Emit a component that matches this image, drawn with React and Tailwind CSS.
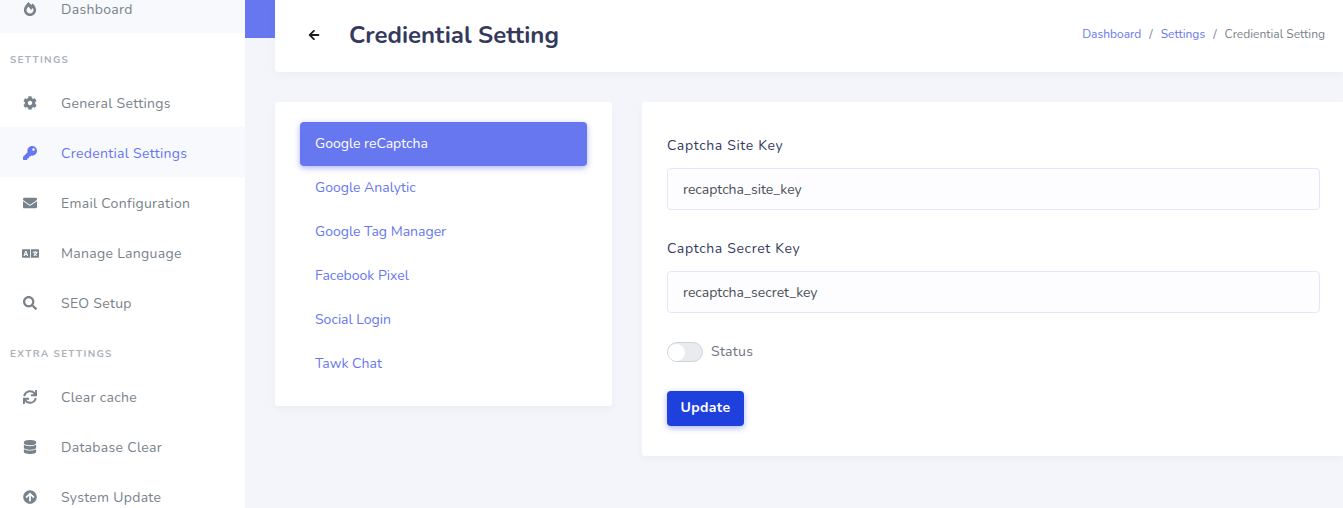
import {
  FaArrowCircleUp,
  FaArrowLeft,
  FaCog,
  FaDatabase,
  FaEnvelope,
  FaFireAlt,
  FaKey,
  FaLanguage,
  FaSearch,
  FaSync,
} from "react-icons/fa";

const font = "font-['Nunito','Lato','Noto_Sans',sans-serif]";

const SideItem = ({ icon: Icon, label, active, tint, size = 14 }) => (
  <div
    className={`flex h-[50px] items-center pt-[2px] ${tint || active ? "bg-[#f8f9fc]" : ""} ${
      active ? "text-[#6777ef]" : "text-[#78828a]"
    }`}
  >
    <span className="flex w-[61px] justify-center pr-[1px]">
      <Icon size={size} />
    </span>
    <span className="text-[14px] tracking-[0.3px]">{label}</span>
  </div>
);

const SideTitle = ({ children }) => (
  <div className="flex h-[44px] items-center pl-[10px] pt-[10.5px] text-[10px] font-bold tracking-[1.3px] text-[#a9b2ba]">
    {children}
  </div>
);

const Sidebar = () => (
  <aside className="w-[245px] shrink-0 overflow-hidden bg-white">
    <div className="-mt-[17px]">
      <SideItem icon={FaFireAlt} label="Dashboard" tint />
      <SideTitle>SETTINGS</SideTitle>
      <SideItem icon={FaCog} label="General Settings" />
      <SideItem icon={FaKey} label="Credential Settings" active />
      <SideItem icon={FaEnvelope} label="Email Configuration" />
      <SideItem icon={FaLanguage} label="Manage Language" size={17} />
      <SideItem icon={FaSearch} label="SEO Setup" />
      <SideTitle>EXTRA SETTINGS</SideTitle>
      <SideItem icon={FaSync} label="Clear cache" />
      <SideItem icon={FaDatabase} label="Database Clear" />
      <SideItem icon={FaArrowCircleUp} label="System Update" />
    </div>
  </aside>
);

const tabs = ["Google reCaptcha", "Google Analytic", "Google Tag Manager", "Facebook Pixel", "Social Login", "Tawk Chat"];

const Field = ({ label, value }) => (
  <div className="mb-[29px]">
    <label className="mb-[12px] block text-[14px] font-normal leading-[20px] tracking-[0.65px] text-[#34395e]">{label}</label>
    <input
      readOnly
      value={value}
      className="h-[42px] w-full rounded-[4px] border border-[#e4e6fc] bg-[#fdfdff] px-[15px] text-[14px] text-[#495057] outline-none"
    />
  </div>
);

export default function App() {
  return (
    <div className={`flex h-[508px] w-full overflow-hidden bg-[#f4f6f9] ${font}`}>
      <Sidebar />

      <main className="relative min-w-0 flex-1 bg-[#f4f5fa]">
        <div className="absolute inset-x-0 top-0 h-[38px] bg-[#6777ef]" />

        <div className="relative ml-[30px] flex h-[72px] items-center rounded-bl-[3px] bg-white pb-[3px] pl-[33px] pr-[18px] shadow-[0_4px_8px_rgb(0,0,0,0.03)]">
          <FaArrowLeft size={12} className="text-[#191d21]" />
          <h1 className="ml-[29px] mt-[1px] text-[24px] font-bold text-[#34395e]">Crediential Setting</h1>
          <div className="mb-[2px] ml-auto flex items-center text-[12px] text-[#78828a]">
            <span className="text-[#6777ef]">Dashboard</span>
            <span className="mx-[8px]">/</span>
            <span className="text-[#6777ef]">Settings</span>
            <span className="mx-[8px]">/</span>
            <span>Crediential Setting</span>
          </div>
        </div>

        <div className="relative ml-[30px] mt-[30px] flex items-start gap-[30px]">
          <div className="w-[337px] shrink-0 rounded-[3px] bg-white px-[25px] pb-[20px] pt-[20px] shadow-[0_4px_8px_rgb(0,0,0,0.03)]">
            {tabs.map((tab, i) => (
              <div
                key={tab}
                className={`flex h-[44px] items-center rounded-[4px] px-[15px] pb-[2px] text-[14px] ${
                  i === 0
                    ? "bg-[#6777ef] text-white shadow-[0_2px_6px_#acb5f6]"
                    : "text-[#6777ef]"
                }`}
              >
                {tab}
              </div>
            ))}
          </div>

          <div className="min-w-0 flex-1 rounded-l-[3px] bg-white pb-[30px] pl-[25px] pr-[23px] pt-[34px] shadow-[0_4px_8px_rgb(0,0,0,0.03)]">
            <Field label="Captcha Site Key" value="recaptcha_site_key" />
            <Field label="Captcha Secret Key" value="recaptcha_secret_key" />
            <div className="mt-[29px] flex h-[20px] items-center">
              <span className="flex h-[20px] w-[36px] items-center rounded-full border border-[#ced4da] bg-[#e9ecef]">
                <span className="h-[17px] w-[17px] rounded-full bg-white" />
              </span>
              <span className="mb-[1px] ml-[8px] text-[14px] tracking-[0.3px] text-[#6c757d]">Status</span>
            </div>
            <button className="mt-[29px] flex h-[35px] w-[77px] items-center justify-center rounded-[4px] bg-[#1e40dc] pb-[2px] text-[14px] font-bold tracking-[0.4px] text-white shadow-[0_2px_6px_#acb5f6]">
              Update
            </button>
          </div>
        </div>
      </main>
    </div>
  );
}
